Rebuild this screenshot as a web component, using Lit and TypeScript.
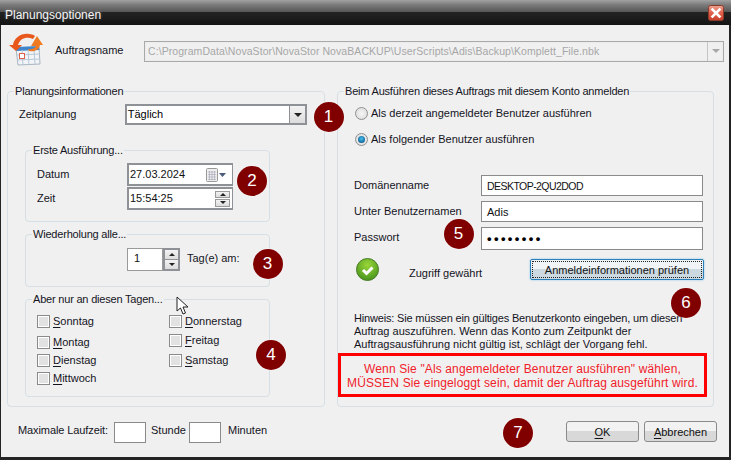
import { LitElement, html, css } from "lit";
import { customElement } from "lit/decorators.js";

const badges: [string, number, number][] = [
  ["1", 328.5, 117], ["2", 252, 181], ["3", 267.5, 264], ["4", 271, 355],
  ["5", 458.5, 233.5], ["6", 686, 302.5], ["7", 518, 432.5],
];

const colA: [string, string][] = [["S", "onntag"], ["M", "ontag"], ["D", "ienstag"], ["M", "ittwoch"]];
const colB: [string, string][] = [["D", "onnerstag"], ["F", "reitag"], ["S", "amstag"]];

const spinner = html`<span class="spin"><i><b class="up"></b></i><i><b class="down"></b></i></span>`;
const day = ([a, b]: [string, string]) => html`<label class="check"><span class="box"></span><span><u>${a}</u>${b}</span></label>`;

@customElement("app-root")
export class AppRoot extends LitElement {
  static styles = css`
    :host { display: block; width: 731px; height: 460px; font: 11px/14px "Liberation Sans", Arial, sans-serif; color: #14141e; }
    * { box-sizing: border-box; }
    .win { position: relative; width: 731px; height: 460px; background: #242424; display: flex; flex-direction: column; padding: 0 2px 3px 1px; overflow: hidden; }
    .title { height: 25px; flex: none; margin: 0 -2px 0 -1px; padding: 8px 7px 0 5px; display: flex; justify-content: space-between; align-items: flex-start;
      background: linear-gradient(#a2a2a2 0, #7a7a7a 5px, #555 12px, #222 12.5px, #141414 25px); color: #f6f6f6; font-size: 12px; text-shadow: 0 0 3px rgba(255,255,255,.35); }
    .close { width: 16px; height: 16px; display: block; margin-top: -3px; flex: none; }
    .body { flex: 1; background: #f0f0f0; display: flex; flex-direction: column; padding: 8px 5px 0 6px; position: relative; }
    .head { display: flex; align-items: center; height: 36px; flex: none; }
    .logo { width: 32px; height: 34px; margin: 0 14px 0 2px; flex: none; overflow: visible; }
    .head .lbl { width: 89px; margin-top: -2px; }
    .combo { height: 21px; border: 1px solid #a9a9a9; display: flex; align-items: center; background: #f0f0f0; color: #a7a7a7; padding-left: 3px; flex: 1; box-shadow: inset 0 0 0 1px #ececec; font-size: 10.5px; letter-spacing: .07px; }
    .combo .txt { flex: 1; white-space: nowrap; overflow: hidden; }
    .combo .btn { width: 16px; height: 19px; border-left: 1px solid #c4c4c4; display: flex; align-items: center; justify-content: center; }
    .tri { width: 0; height: 0; border: 4px solid transparent; border-top: 4px solid #a7a7a7; border-bottom: 0; }
    .cols { display: flex; gap: 12px; margin-top: 22px; height: 316px; flex: none; }
    .grp { position: relative; border: 1px solid #d5dfe5; border-radius: 4px; }
    .legend { position: absolute; top: -8px; left: 6px; background: #f0f0f0; padding: 0 1px; white-space: nowrap; letter-spacing: -.2px; }
    .left { width: 318px; padding: 12px 17px 0 17px; flex: none; }
    .right { width: 377px; flex: none; padding: 14px 0 0 16px; }
    .sched { display: flex; align-items: center; height: 21px; margin: 0 0 25px -6px; }
    .sched .lbl { width: 108px; margin-top: -2px; }
    .select { width: 186px; height: 21px; border: 2px solid #8e9196; background: #fff; display: flex; align-items: center; padding-left: 1px; color: #000; }
    .select .txt { flex: 1; margin-top: -1px; }
    .select .btn { width: 16px; height: 17px; background: linear-gradient(#f2f2f2, #dcdcdc); border-left: 1px solid #8e9196; display: flex; align-items: center; justify-content: center; }
    .select .tri { border-top-color: #222; }
    .inner { width: 245px; }
    .first { height: 72px; margin-bottom: 12px; padding: 12px 0 0 11px; }
    .row { display: flex; align-items: center; height: 23px; margin-bottom: 1px; }
    .row .lbl { width: 90px; margin-top: -2px; }
    .field { width: 106px; height: 23px; background: #fff; border: 2px solid #8e9196; border-right-width: 1px; display: flex; align-items: center; padding-left: 1px; color: #111; }
    .field .txt { flex: 1; margin-top: -1px; }
    .cal { width: 21px; height: 14px; display: block; margin-right: 5px; flex: none; }
    .spin { display: flex; flex-direction: column; gap: 1px; width: 15px; height: 16px; margin-right: 2px; flex: none; background: #fff; }
    .spin i { flex: 1; display: flex; align-items: center; justify-content: center; background: linear-gradient(#f3f3f3, #dcdcdc); border: 1px solid #9a9a9a; }
    .up { width: 0; height: 0; border: 3px solid transparent; border-bottom: 3px solid #222; border-top: 0; }
    .down { width: 0; height: 0; border: 3px solid transparent; border-top: 3px solid #222; border-bottom: 0; }
    .rep { height: 53px; margin-bottom: 12px; padding: 13px 0 0 101px; display: flex; align-items: flex-start; }
    .numf { width: 36px; height: 23px; background: #fff; border: 1px solid #9a9a9a; padding: 2px 0 0 6px; color: #111; }
    .rep .spin { width: 17px; height: 23px; padding: 2px; background: #8e9196; margin: 0 7px 0 0; }
    .rep .spin i { border: 0; }
    .rep .ta { margin-top: 3px; }
    .daysg { height: 98px; padding: 14px 0 0 11px; display: flex; }
    .dcol { display: flex; flex-direction: column; }
    .dcol.a { width: 132px; }
    .a .check:nth-child(2) { margin-top: 7px; }
    .a .check:nth-child(3) { margin-top: 4px; }
    .a .check:nth-child(4) { margin-top: 4px; }
    .b .check:nth-child(2) { margin-top: 5px; }
    .b .check:nth-child(3) { margin-top: 6px; }
    .check { display: flex; align-items: center; gap: 3px; white-space: nowrap; height: 14px; }
    .box { width: 13px; height: 13px; border: 1px solid #8a8a8a; box-shadow: inset 0 0 0 1px #fff; background: #e2e2e2; flex: none; }
    u { text-underline-offset: 1.5px; }
    .bottom { display: flex; align-items: center; flex: 1; padding: 0 0 1px 11px; }
    .small { width: 32px; height: 21px; background: #fff; border: 1px solid #8a8a8a; margin-top: 2px; flex: none; }
    .maxl { width: 96px; flex: none; white-space: nowrap; letter-spacing: -.1px; }
    .stunde { width: 33px; margin: 0 5px; flex: none; }
    .minuten { margin-left: 7px; }
    .lab { margin-top: -3px; }
    .spacer { flex: 1; }
    button { font: inherit; color: #111; border: 1px solid #8a8a8a; border-radius: 3px; background: linear-gradient(#f2f2f2 50%, #d8d8d8 50%); padding: 0; height: 21px; }
    .ok { width: 73px; margin-right: 5px; }
    .ab { width: 73px; margin-right: 7px; }
    .rad { display: flex; align-items: center; gap: 3px; height: 14px; margin-left: 1px; white-space: nowrap; }
    .rad + .rad { margin-top: 12px; }
    .rbtn { width: 13px; height: 13px; border-radius: 50%; border: 1px solid #8f8f8f; background: radial-gradient(#f6f6f6, #d8d8d8); flex: none; display: flex; align-items: center; justify-content: center; }
    .rbtn.on::after { content: ""; width: 7px; height: 7px; border-radius: 50%; background: radial-gradient(circle at 50% 40%, #49c0ef, #0a5a8e 80%); }
    .acct { margin-top: 29px; width: 349px; display: grid; grid-template-columns: 127px 222px; grid-auto-rows: 21px; row-gap: 5px; align-items: center; }
    .acct > span { margin-top: -1px; }
    .acct .in { height: 21px; border: 1px solid #8a8a8a; background: #fff; padding: 3px 5px; color: #111; }
    .acct .up-txt { font-size: 10.5px; letter-spacing: -.55px; }
    .acct .dots { height: 23px; margin-top: 2px; letter-spacing: 2.4px; font-size: 13px; font-weight: 700; color: #000; padding-top: 4px; }
    .status { margin-top: 10px; width: 350px; height: 23px; display: flex; align-items: flex-start; }
    .status svg { width: 23px; height: 23px; margin: 0 30px 0 2px; flex: none; }
    .status .za { margin-top: 8px; }
    .chk { margin: 1px 0 0 auto; width: 174px; height: 21px; border-radius: 2px; border: 1px solid #2a7fb8; outline: 1px dotted #222; outline-offset: -3px; background: linear-gradient(#f0f4f6 50%, #cdd9e0 50%); box-shadow: 0 0 2px #77bfe6; }
    .hint { margin-top: 31px; line-height: 13px; white-space: nowrap; }
    .tight { letter-spacing: -.18px; }
    .warn { margin: 2px 0 0 -16px; width: 369px; height: 44px; border: 3px solid #f00; color: #f0202a; text-align: center; line-height: 14px; padding-top: 6px; white-space: nowrap; font-size: 12px; letter-spacing: .13px; }
    .badge { position: absolute; width: 30px; height: 30px; margin: -15px 0 0 -15px; border-radius: 50%; background: #800000; color: #fff; display: flex; align-items: center; justify-content: center; font: 17px "Liberation Sans", sans-serif; box-shadow: 0 0 2px rgba(255,255,255,.8); }
    .cursor { position: absolute; left: 176px; top: 296px; width: 14px; height: 20px; }
  `;

  render() {
    return html`<div class="win">
      <div class="title"><span>Planungsoptionen</span>
        <svg class="close" viewBox="0 0 16 16"><defs><linearGradient id="cl" x1="0" y1="0" x2="0" y2="1"><stop offset="0" stop-color="#eda292"/><stop offset=".5" stop-color="#e0604a"/><stop offset="1" stop-color="#c8402a"/></linearGradient></defs><rect x=".5" y=".5" width="15" height="15" rx="2" fill="url(#cl)" stroke="#8a3a2a"/><path d="M4.5 4.5l7 7M11.5 4.5l-7 7" stroke="#fff" stroke-width="2.6" stroke-linecap="square"/></svg>
      </div>
      <div class="body">
        <div class="head">
          <svg class="logo" viewBox="0 0 32 34">
            <path d="M7 14l23-1 1 17-22 1z" fill="#f2f5f8" stroke="#a8b4c0"/>
            <path d="M7 13l23-1 .4 4-23 1z" fill="#3f86cc"/>
            <path d="M13 16l1 15M19 16l1 15M25 15l1 15M8 21l23-1M8 26l23-1" stroke="#b8c8d8" fill="none"/>
            <rect x="10.5" y="19.5" width="5" height="5" fill="#fff" stroke="#e0604a"/>
            <path d="M4 11C5 4 12-1 20 0c3 .4 5 1 6 2l-2 3c-6-3-13-1-15 6h4l-6 6-7-6z" fill="#e8581c"/>
            <path d="M22 12l6-10 6 9h-3c-1 5-5 7-11 6l-1-2c4 .6 7-.6 8-3z" fill="#f07a22"/>
          </svg>
          <span class="lbl">Auftragsname</span>
          <div class="combo"><span class="txt">C:\\ProgramData\\NovaStor\\NovaStor NovaBACKUP\\UserScripts\\Adis\\Backup\\Komplett_File.nbk</span><span class="btn"><span class="tri"></span></span></div>
        </div>
        <div class="cols">
          <div class="grp left">
            <span class="legend">Planungsinformationen</span>
            <div class="sched"><span class="lbl">Zeitplanung</span>
              <div class="select"><span class="txt">Täglich</span><span class="btn"><span class="tri"></span></span></div>
            </div>
            <div class="grp inner first">
              <span class="legend">Erste Ausführung...</span>
              <div class="row"><span class="lbl">Datum</span><div class="field"><span class="txt">27.03.2024</span>
                <svg class="cal" viewBox="0 0 21 14"><rect x=".5" y=".5" width="11" height="13" rx="1" fill="#eee" stroke="#999"/><path d="M2 4h8M2 6.5h8M2 9h8M2 11.5h8M3.5 3v9M6 3v9M8.5 3v9" stroke="#aab" stroke-width=".7"/><path d="M13 5h7l-3.5 4z" fill="#4a5a7a"/></svg></div></div>
              <div class="row"><span class="lbl">Zeit</span><div class="field"><span class="txt">15:54:25</span>${spinner}</div></div>
            </div>
            <div class="grp inner rep">
              <span class="legend">Wiederholung alle...</span>
              <div class="numf">1</div>${spinner}<span class="ta">Tag(e) am:</span>
            </div>
            <div class="grp inner daysg">
              <span class="legend">Aber nur an diesen Tagen...</span>
              <div class="dcol a">${colA.map(day)}</div>
              <div class="dcol b">${colB.map(day)}</div>
            </div>
          </div>
          <div class="grp right">
            <span class="legend">Beim Ausführen dieses Auftrags mit diesem Konto anmelden</span>
            <label class="rad"><span class="rbtn"></span>Als derzeit angemeldeter Benutzer ausführen</label>
            <label class="rad"><span class="rbtn on"></span>Als folgender Benutzer ausführen</label>
            <div class="acct">
              <span>Domänenname</span><div class="in up-txt">DESKTOP-2QU2DOD</div>
              <span>Unter Benutzernamen</span><div class="in">Adis</div>
              <span>Passwort</span><div class="in dots">••••••••</div>
            </div>
            <div class="status">
              <svg viewBox="0 0 23 23"><defs><radialGradient id="g" cx=".5" cy=".3" r=".8"><stop offset="0" stop-color="#9ad63a"/><stop offset="1" stop-color="#3c8c18"/></radialGradient></defs><circle cx="11.5" cy="11.5" r="11" fill="url(#g)" stroke="#4a7c2a"/><path d="M7 12l3.5 3.5 6-6" stroke="#fff" stroke-width="3" fill="none"/></svg>
              <span class="za">Zugriff gewährt</span>
              <button class="chk">Anmeldeinformationen prüfen</button>
            </div>
            <div class="hint"><span class="tight">Hinweis: Sie müssen ein gültiges Benutzerkonto eingeben, um diesen</span><br>Auftrag auszuführen. Wenn das Konto zum Zeitpunkt der<br>Auftragsausführung nicht gültig ist, schlägt der Vorgang fehl.</div>
            <div class="warn">Wenn Sie "Als angemeldeter Benutzer ausführen" wählen,<br>MÜSSEN Sie eingeloggt sein, damit der Auftrag ausgeführt wird.</div>
          </div>
        </div>
        <div class="bottom">
          <span class="lab maxl">Maximale Laufzeit:</span><div class="small"></div><span class="stunde lab">Stunde</span><div class="small"></div><span class="minuten lab">Minuten</span>
          <span class="spacer"></span>
          <button class="ok"><u>O</u>K</button><button class="ab"><u>A</u>bbrechen</button>
        </div>
      </div>
      ${badges.map(([n, x, y]) => html`<span class="badge" style="left:${x}px;top:${y}px">${n}</span>`)}
      <svg class="cursor" viewBox="0 0 14 20"><path d="M1 1v14l3.5-3 2.5 6 2.5-1-2.5-6h5z" fill="#fff" stroke="#222"/></svg>
    </div>`;
  }
}
